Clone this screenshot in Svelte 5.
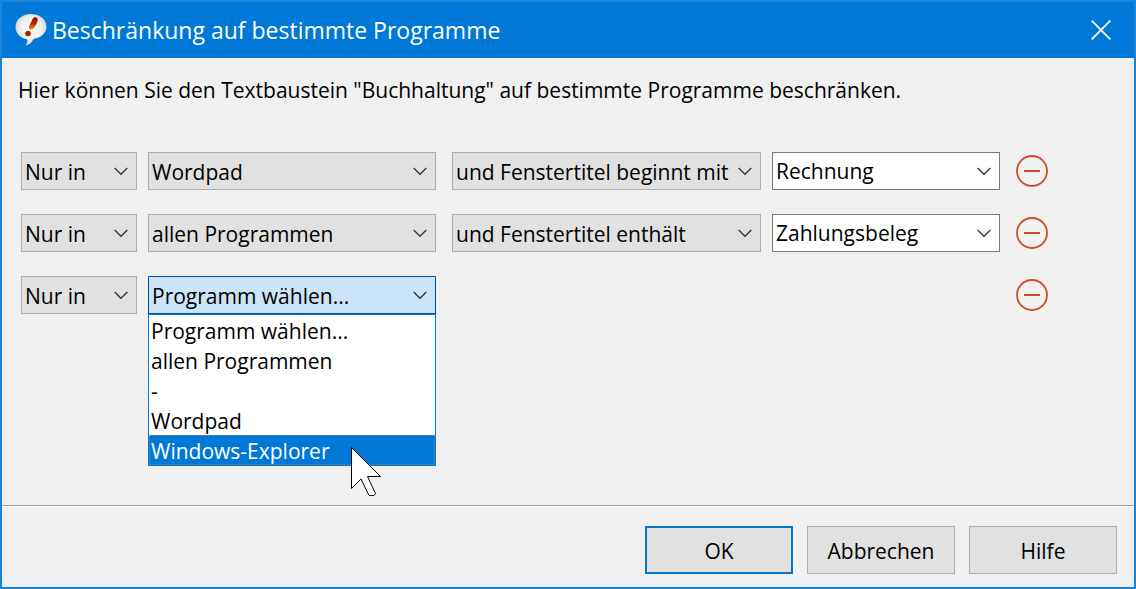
<script>
    const scopes = ["Nur in", "Nicht in"];
    const programs = ["Programm wählen...", "allen Programmen", "-", "Wordpad", "Windows-Explorer"];
    const conditions = ["und Fenstertitel beginnt mit", "und Fenstertitel enthält"];

    let rows = $state([
        { scope: "Nur in", program: "Wordpad", condition: "und Fenstertitel beginnt mit", title: "Rechnung", open: false },
        { scope: "Nur in", program: "allen Programmen", condition: "und Fenstertitel enthält", title: "Zahlungsbeleg", open: false },
        { scope: "Nur in", program: "Programm wählen...", condition: "", title: "", open: true }
    ]);
    let active = $state("Windows-Explorer");

    function choose(row, program) {
        row.program = program;
        row.open = false;
    }
</script>

{#snippet chevron()}
    <svg class="chevron" width="14" height="9" viewBox="0 0 14 9" aria-hidden="true">
        <path d="M0.7 1 L7 7.3 L13.3 1" fill="none" stroke="#333" stroke-width="1.3" />
    </svg>
{/snippet}

<div class="window">
    <header>
        <svg class="logo" width="32" height="34" viewBox="0 0 32 34" aria-hidden="true">
            <defs>
                <radialGradient id="bubble" cx="0.5" cy="0.45" r="0.6">
                    <stop offset="0" stop-color="#fff" />
                    <stop offset="0.6" stop-color="#ededed" />
                    <stop offset="1" stop-color="#c4c4c4" />
                </radialGradient>
                <linearGradient id="mark" x1="0" y1="0" x2="0" y2="1">
                    <stop offset="0" stop-color="#8c0a00" />
                    <stop offset="0.5" stop-color="#b82a00" />
                    <stop offset="1" stop-color="#f08a1c" />
                </linearGradient>
            </defs>
            <path
                d="M16 1 C25 1 31.5 6.5 31.5 14 C31.5 20 26 24.6 18.5 26 C17 29.5 14 32 10.5 32.5 C12 30.5 12.5 28.5 12.3 26.3 C5 25 0.5 20 0.5 14 C0.5 6.5 7 1 16 1 Z"
                fill="url(#bubble)"
            />
            <path
                d="M17.4 6.2 C18.6 3.4 23 3.6 22.8 6.8 C22.2 10.5 20 14 17.8 16 C15.8 17.4 13.6 16.2 14 14 C14.8 11 16.4 9 17.4 6.2 Z"
                fill="url(#mark)"
            />
            <circle cx="13" cy="20.5" r="2.8" fill="#a82400" />
        </svg>
        <h1>Beschränkung auf bestimmte Programme</h1>
        <button class="close" aria-label="Schließen">
            <svg width="20" height="20" viewBox="0 0 20 20">
                <path d="M0.7 0.7 L19.3 19.3 M19.3 0.7 L0.7 19.3" stroke="#fff" stroke-width="1.8" />
            </svg>
        </button>
    </header>

    <main>
        <p>Hier können Sie den Textbaustein "Buchhaltung" auf bestimmte Programme beschränken.</p>

        {#each rows as row, i}
            <div class="row">
                <div class="combo">
                    <select aria-label="Geltung" bind:value={row.scope}>
                        {#each scopes as scope}
                            <option>{scope}</option>
                        {/each}
                    </select>
                    {@render chevron()}
                </div>

                <div class="combo" class:open={row.open}>
                    <select aria-label="Programm" bind:value={row.program}>
                        {#each programs as program}
                            <option>{program}</option>
                        {/each}
                    </select>
                    {@render chevron()}
                    {#if row.open}
                        <div class="list" role="listbox" aria-label="Programme">
                            {#each programs as program}
                                <button
                                    role="option"
                                    aria-selected={program === active}
                                    class:active={program === active}
                                    onmouseenter={() => (active = program)}
                                    onclick={() => choose(row, program)}>{program}</button
                                >
                            {/each}
                            <svg class="pointer" width="32" height="52" viewBox="-1 -1 32 52" aria-hidden="true">
                                <path
                                    d="M0.5 0.5 V41.5 L10 32 L18 48.5 L23 48.5 L24.5 46.5 L16.5 29.5 H29.5 Z"
                                    fill="#fff"
                                    stroke="#000"
                                />
                            </svg>
                        </div>
                    {/if}
                </div>

                {#if row.condition}
                    <div class="combo condition">
                        <select aria-label="Bedingung" bind:value={row.condition}>
                            {#each conditions as condition}
                                <option>{condition}</option>
                            {/each}
                        </select>
                        {@render chevron()}
                    </div>
                    <div class="combo">
                        <input type="text" aria-label="Fenstertitel" bind:value={row.title} />
                        {@render chevron()}
                    </div>
                {/if}

                <button class="remove" aria-label="Entfernen" onclick={() => rows.splice(i, 1)}>
                    <svg width="32" height="32" viewBox="0 0 32 32">
                        <circle cx="16" cy="16" r="15" fill="none" stroke="#cf4a2e" stroke-width="1.8" />
                        <path d="M8 16 H24" stroke="#cf4a2e" stroke-width="2" />
                    </svg>
                </button>
            </div>
        {/each}
    </main>

    <footer>
        <button class="default">OK</button>
        <button>Abbrechen</button>
        <button>Hilfe</button>
    </footer>
</div>

<style>
    :global(body) {
        margin: 0;
    }

    .window {
        box-sizing: border-box;
        min-height: 100vh;
        display: flex;
        flex-direction: column;
        border: 2px solid #1883d7;
        background: #f0f0f0;
        color: #000;
        font-family: "Open Sans", "Noto Sans", sans-serif;
        font-size: 21px;
        line-height: 30px;
    }

    button,
    select,
    input {
        box-sizing: border-box;
        margin: 0;
        border-radius: 0;
        color: inherit;
        font: inherit;
    }

    header {
        display: flex;
        align-items: center;
        height: 56px;
        padding: 0 23px 0 13px;
        background: #0078d7;
        color: #fff;
    }

    .logo {
        flex: none;
        margin-right: 5px;
    }

    h1 {
        flex: 1;
        margin: 0;
        font-size: 23px;
        font-weight: 400;
    }

    .close,
    .remove {
        display: flex;
        padding: 0;
        border: none;
        background: none;
    }

    main {
        padding: 17px 86px 24px 19px;
    }

    p {
        margin: 0 -60px 47px -3px;
    }

    .row {
        display: grid;
        grid-template-columns: 116px 288fr 314fr 228fr 37px;
        column-gap: 11px;
        align-items: center;
        margin-bottom: 24px;
    }

    .combo {
        position: relative;
        display: grid;
        grid-template-columns: minmax(0, 1fr) auto;
        align-items: center;
    }

    .condition {
        margin-left: 5px;
    }

    .combo select,
    .combo input {
        grid-area: 1 / 1 / 2 / 3;
        width: 100%;
        height: 38px;
        padding: 2px 3px 0;
        border: 1px solid #adadad;
        background: #e1e1e1;
        appearance: none;
    }

    .combo input {
        padding-top: 0;
        border-color: #7a7a7a;
        background: #fff;
    }

    .open select {
        border-color: #005499;
        background: #cce4f7;
    }

    .chevron {
        grid-area: 1 / 2;
        position: relative;
        margin-right: 9px;
        pointer-events: none;
    }

    .list {
        position: absolute;
        z-index: 1;
        top: 100%;
        left: 0;
        right: 0;
        border: 1px solid #0078d7;
        background: #fff;
    }

    .list button {
        display: block;
        width: 100%;
        height: 30px;
        padding: 2px 2px 0;
        border: none;
        background: none;
        line-height: 28px;
        text-align: left;
    }

    .list .active {
        outline: 1px dotted rgba(255, 135, 40, 0.5);
        outline-offset: -1px;
        background: #0078d7;
        color: #fff;
    }

    .pointer {
        position: absolute;
        left: 201px;
        top: 131px;
        pointer-events: none;
    }

    .remove {
        grid-column: 5;
        justify-self: end;
    }

    footer {
        display: flex;
        justify-content: flex-end;
        gap: 14px;
        margin-top: auto;
        padding: 20px 17px 13px;
        border-top: 1px solid #a0a0a0;
        box-shadow: inset 0 1px #fff;
    }

    footer button {
        width: 148px;
        height: 48px;
        padding: 2px 0 0;
        border: 1px solid #adadad;
        background: #e1e1e1;
    }

    footer .default {
        border: 2px solid #0078d7;
    }
</style>
